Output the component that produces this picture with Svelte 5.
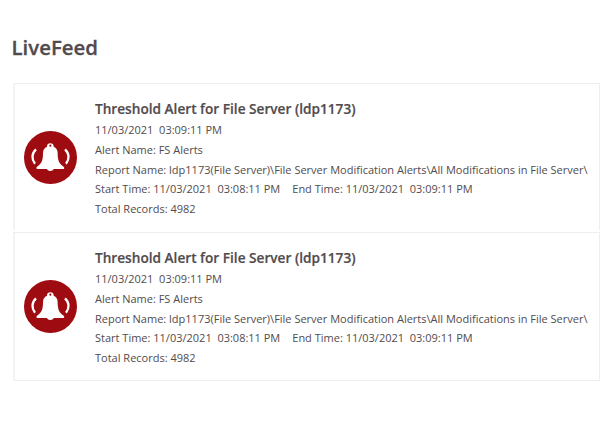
<script lang="ts">
	type Alert = {
		title: string;
		date: string;
		name: string;
		report: string;
		start: string;
		end: string;
		records: number;
	};

	const fileServerAlert: Alert = {
		title: "Threshold Alert for File Server (ldp1173)",
		date: "11/03/2021\u00a0 03:09:11 PM",
		name: "FS Alerts",
		report: "ldp1173(File Server)\\File Server Modification Alerts\\All Modifications in File Server\\",
		start: "11/03/2021\u00a0 03:08:11 PM",
		end: "11/03/2021\u00a0 03:09:11 PM",
		records: 4982
	};

	const alerts: Alert[] = [fileServerAlert, { ...fileServerAlert }];
</script>

<main>
	<h1>LiveFeed</h1>
	<div class="feed">
		{#each alerts as alert}
			<article class="alert">
				<svg class="icon" viewBox="0 0 159 159" aria-hidden="true">
					<circle cx="79.5" cy="79.5" r="79.5" fill="#9e0b10" />
					<path
						fill="#fff"
						d="M79 37c-6 0-10 4-10 9v1c-8 3-12 10-12 20 0 21-4 31-18 40-3 2-2 7 1 7h29c1 3 5 6 10 6s9-3 10-6h29c3 0 4-5 1-7-14-9-18-19-18-40 0-10-4-17-12-20v-1c0-5-4-9-10-9z"
					/>
					<circle cx="79" cy="44" r="3.2" fill="#9e0b10" />
					<path
						fill="none"
						stroke="#fff"
						stroke-width="7"
						d="M36 55c-13 12-14 29-3 43M123 55c13 12 14 29 3 43"
					/>
				</svg>
				<div class="details">
					<h2>{alert.title}</h2>
					<p>{alert.date}</p>
					<p>Alert Name: {alert.name}</p>
					<p>Report Name: {alert.report}</p>
					<p class="times">
						<span>Start Time: {alert.start}</span>
						<span>End Time: {alert.end}</span>
					</p>
					<p>Total Records: {alert.records}</p>
				</div>
			</article>
		{/each}
	</div>
</main>

<style>
	:global(body) {
		background: #fff;
	}

	main {
		box-sizing: border-box;
		width: 612px;
		height: 430px;
		padding: 32px 12px 0 11px;
		overflow: hidden;
		color: #524b4d;
		font-family: "Open Sans", sans-serif;
	}

	h1 {
		margin: 0 0 0 0.5px;
		font-size: 20.4px;
		font-weight: 600;
		line-height: 30px;
		-webkit-text-stroke: 0.3px #524b4d;
	}

	.feed {
		display: flex;
		flex-direction: column;
		gap: 2px;
		margin: 21px 0 0 2px;
	}

	.alert {
		box-sizing: border-box;
		display: flex;
		width: 587px;
		height: 147px;
		padding-left: 9px;
		border: 1px solid #eeeeee;
		border-left: 2px solid #f3f3f3;
		border-bottom: none;
	}

	.alert:last-child {
		height: 149px;
		border-bottom: 1px solid #eeeeee;
	}

	.icon {
		flex: none;
		width: 53px;
		height: 53px;
		margin-top: 47px;
	}

	.details {
		margin: 14px 0 0 18px;
		white-space: nowrap;
	}

	h2 {
		margin: 0;
		font-size: 13.65px;
		font-weight: 600;
		line-height: 22px;
		-webkit-text-stroke: 0.2px #524b4d;
	}

	p {
		margin: 0;
		font-size: 11px;
		line-height: 19.8px;
	}

	.times {
		display: flex;
		gap: 12px;
	}
</style>
